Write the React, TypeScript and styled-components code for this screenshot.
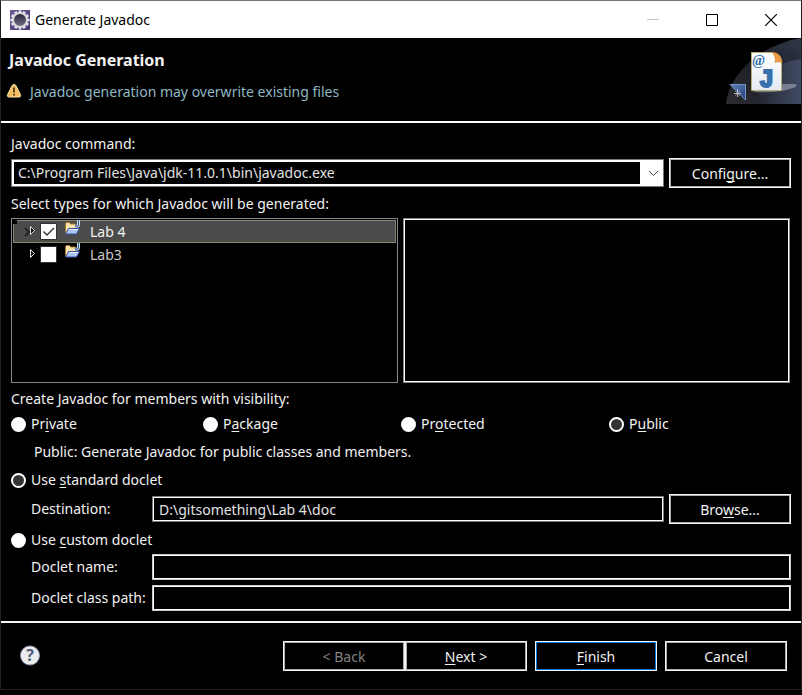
import React, { useState } from "react";
import styled, { createGlobalStyle, css } from "styled-components";

const GlobalStyle = createGlobalStyle`
  *, *::before, *::after { box-sizing: border-box; }
  body {
    margin: 0;
    background: #000;
    color: #f2f2f2;
    font-family: "Noto Sans", "Open Sans", sans-serif;
    font-size: 14px;
    line-height: 20px;
  }
  button, input, select { font: inherit; color: inherit; margin: 0; }
`;

const Dialog = styled.div`
  display: flex;
  flex-direction: column;
  min-height: calc(100vh - 5px);
  border: 1px solid #1f1f1f;
  border-top-color: #767676;
`;

const TitleBar = styled.header`
  display: flex;
  align-items: center;
  height: 37px;
  padding: 0 1px 0 9px;
  background: #fff;
  color: #000;
`;

const TitleText = styled.span`
  flex: 1;
  padding-left: 5px;
`;

const CaptionButton = styled.button`
  display: flex;
  align-items: center;
  justify-content: center;
  width: 59px;
  height: 36px;
  padding: 0;
  border: 0;
  background: none;
`;

const Banner = styled.section`
  display: flex;
  justify-content: space-between;
  height: 85px;
  padding-left: 8px;
  border-bottom: 2px solid #fff;
`;

const BannerHeading = styled.h1`
  margin: 12px 0;
  font-size: 16px;
  line-height: 20px;
  font-weight: 700;
`;

const BannerMessage = styled.p`
  display: flex;
  align-items: center;
  gap: 8px;
  margin: 0;
  margin-left: -3px;
  color: #8fb9c4;
`;

const Body = styled.main`
  display: flex;
  flex: 1;
  flex-direction: column;
  padding: 11px 10px 10px;
`;

const Caption = styled.div`
  padding-bottom: 4px;
`;

const FieldLabel = styled.label`
  display: block;
  white-space: nowrap;
`;

const CommandRow = styled.div`
  display: flex;
  align-items: center;
  gap: 5px;
  padding: 4px 0 6px;
`;

const ComboWrap = styled.div`
  position: relative;
  flex: 1;
  min-width: 0;
`;

const Combo = styled.select`
  display: block;
  width: 100%;
  height: 28px;
  padding: 0 4px;
  appearance: none;
  border: 3px solid #fff;
  border-right-width: 24px;
  border-radius: 0;
  outline: 1px solid #767676;
  outline-offset: -1px;
  background: #000;
  color: #e2e2e2;
`;

const ComboArrow = styled.svg`
  position: absolute;
  top: 11px;
  right: 5px;
  pointer-events: none;
`;

const PushButton = styled.button<{ $primary?: boolean }>`
  width: 122px;
  height: 30px;
  padding: 1px 0 0;
  border: 1px solid #f5f5f5;
  border-radius: 0;
  background: #000;
  box-shadow: inset 0 0 0 1px ${(p) => (p.$primary ? "#0078d7" : "#adadad")};
  &:disabled { color: #838383; }
`;

const Panels = styled.div`
  display: grid;
  flex: 1;
  grid-template-columns: 1fr 1fr;
  gap: 5px;
  min-height: 165px;
  margin-right: 1px;
  margin-bottom: 6px;
`;

const Tree = styled.ul`
  margin: 0;
  padding: 1px;
  list-style: none;
  border: 1px solid #828790;
`;

const TreeItem = styled.li<{ $selected?: boolean }>`
  position: relative;
  display: flex;
  align-items: center;
  height: 23px;
  padding-left: 9px;
  border: 1px solid transparent;
  color: #c8c8c8;
  ${(p) =>
    p.$selected &&
    css`
      border-color: #85876c;
      background: #4b4b4b;
      color: #f2f2f2;
      &::before {
        content: "";
        position: absolute;
        top: -1px;
        left: -1px;
        width: 4px;
        height: 4px;
        background: #000;
      }
    `}
`;

const Expander = styled.button`
  display: flex;
  width: 18px;
  padding: 0;
  border: 0;
  background: none;
`;

const TreeLabel = styled.label`
  display: flex;
  align-items: center;
  gap: 8px;
`;

const CheckCell = styled.span`
  position: relative;
  display: flex;
`;

const CheckInput = styled.input`
  width: 15px;
  height: 15px;
  appearance: none;
  background: #fff;
  outline: 1px solid #333;
`;

const Tick = styled.svg`
  position: absolute;
  top: 0;
  left: 0;
  pointer-events: none;
`;

const ProjectIcon = styled.svg`
  display: block;
  margin-bottom: 8px;
`;

const ItemName = styled.span`
  padding-left: 2px;
`;

const MemberPane = styled.div`
  border: 2px solid #fff;
  outline: 1px solid #828790;
  outline-offset: -1px;
  background: #000200;
`;

const RadioGrid = styled.div`
  display: grid;
  grid-template-columns: 192fr 198fr 208fr 182fr;
  padding-top: 1px;
`;

const RadioLabel = styled.label`
  display: flex;
  align-items: center;
  gap: 5px;
`;

const RadioInput = styled.input`
  flex: none;
  width: 15px;
  height: 15px;
  appearance: none;
  border: 2px solid #fff;
  border-radius: 50%;
  background: #fff;
  &:checked { background: #333; }
`;

const Hint = styled.p`
  margin: 0;
  padding: 8px 0 8px 23px;
`;

const FieldRow = styled.div<{ $height: number }>`
  display: grid;
  grid-template-columns: 116px 1fr auto;
  align-items: center;
  column-gap: 5px;
  height: ${(p) => p.$height}px;
  padding-left: 20px;
`;

const DestinationRow = styled(FieldRow)`
  margin: 4px 0 6px;
`;

const DocletFields = styled.div`
  display: grid;
  gap: 5px;
  padding-top: 4px;
`;

const TextInput = styled.input<{ $wide?: boolean }>`
  grid-column: ${(p) => (p.$wide ? "2 / -1" : "2")};
  width: 100%;
  min-width: 0;
  height: 26px;
  padding: 0 5px;
  border: 2px solid #fff;
  border-radius: 0;
  outline: 1px solid ${(p) => (p.$wide ? "#c8c8c8" : "#7a7a7a")};
  outline-offset: -1px;
  background: #000;
  color: #e2e2e2;
`;

const Footer = styled.footer`
  display: flex;
  align-items: center;
  gap: 8px;
  height: 68px;
  padding: 0 14px 0 18px;
  border-top: 2px solid #f4f4f4;
`;

const HelpButton = styled.button`
  display: flex;
  margin-right: auto;
  padding: 0;
  border: 0;
  background: none;
`;

const ButtonPair = styled.div`
  display: flex;
`;

const Mnemonic = styled.u`
  text-underline-offset: 2px;
  text-decoration-skip-ink: none;
`;

const teeth = Array.from({ length: 12 }, (_, i) => i * 30);

function GearLogo() {
  return (
    <svg width="20" height="20" viewBox="0 0 20 20" aria-hidden="true">
      <defs>
        <linearGradient id="gearBack" x1="0" y1="0" x2="1" y2="1">
          <stop offset="0" stopColor="#6f5b93" />
          <stop offset="1" stopColor="#43346b" />
        </linearGradient>
        <linearGradient id="gearCore" x1="0" y1="0" x2="0" y2="1">
          <stop offset="0" stopColor="#222231" />
          <stop offset="1" stopColor="#77748f" />
        </linearGradient>
      </defs>
      <rect width="20" height="20" fill="url(#gearBack)" />
      {teeth.map((a) => (
        <rect key={a} x="8.6" y="0.4" width="2.8" height="4" fill="#e4e2e8" transform={`rotate(${a} 10 10)`} />
      ))}
      <circle cx="10" cy="10" r="7" fill="url(#gearCore)" stroke="#dddbe2" strokeWidth="2" />
    </svg>
  );
}

function WarningIcon() {
  return (
    <svg width="16" height="16" viewBox="0 0 16 16" aria-hidden="true">
      <path d="M8 .5C9.400.5 9.800 1.300 10.400 2.500l4 8c.7 1.500 0 2.500-1.300 2.500H2.900c-1.300 0-2-1-1.300-2.500l4-8C6.200 1.300 6.600.5 8 .5Z" fill="#f4bd62" stroke="#fae0aa" />
      <path d="M8 3.500v5M8 9.800v1.700" stroke="#4d3518" strokeWidth="1.800" />
    </svg>
  );
}

function BannerArt() {
  return (
    <svg width="75" height="66" viewBox="0 0 75 66" aria-hidden="true">
      <defs>
        <linearGradient id="outerGlow" x1="0" y1="1" x2="1" y2="0">
          <stop offset="0" stopColor="#2b2c31" />
          <stop offset=".5" stopColor="#1d1f26" />
          <stop offset="1" stopColor="#30374a" />
        </linearGradient>
        <linearGradient id="innerGlow" x1="0" y1="0" x2="1" y2="0">
          <stop offset="0" stopColor="#22252d" />
          <stop offset="1" stopColor="#414b66" />
        </linearGradient>
        <linearGradient id="sheet" x1="0" y1="0" x2="0" y2="1">
          <stop offset="0" stopColor="#fff" />
          <stop offset="1" stopColor="#e4eaf2" />
        </linearGradient>
        <linearGradient id="wedge" x1="0" y1="0" x2="1" y2="1">
          <stop offset="0" stopColor="#6384bd" />
          <stop offset="1" stopColor="#243f7a" />
        </linearGradient>
      </defs>
      <path d="M0 66C3 36 34 7 75 0v66Z" fill="url(#outerGlow)" />
      <path d="M30 66C31 43 45 25 75 21v45Z" fill="url(#innerGlow)" />
      <path d="M27 53l14-7h27c4 0 3 3-1 4-11 4-25 5-38 4Z" fill="#8b8da0" opacity=".8" />
      <path d="M4 46.500h15.500V62Z" fill="url(#wedge)" stroke="#7893c4" />
      <path d="M11.500 51v8M8 55.500h7" stroke="#d9dce3" strokeWidth=".8" />
      <path d="M9 53l5 5M14 53l-5 5" stroke="#a8adb8" strokeWidth=".5" />
      <path d="M25.500 14.500h22l8 9v29h-30Z" fill="url(#sheet)" stroke="#b8ad72" />
      <path d="M46 14.500c6-.5 10 4 10 10-3-1-5-1-7 0 1-4 0-7-3-10Z" fill="#ef9c45" stroke="#c98534" strokeWidth=".6" />
      <text x="26" y="27" fontSize="14" fontWeight="700" fontFamily="Liberation Serif, serif" fill="#286aa5">@</text>
      <text x="33" y="49" fontSize="25" fontWeight="700" fontFamily="Liberation Mono, monospace" fill="#3871ab" stroke="#3871ab" strokeWidth="2">J</text>
    </svg>
  );
}

function FolderIcon() {
  return (
    <ProjectIcon width="16" height="16" viewBox="0 0 16 16" aria-hidden="true">
      <path d="M1.500 12.500v-9l1-1h3l1 1.500h5v8Z" fill="#fbe3ad" stroke="#a6792d" />
      <path d="M.5 3.500h1.500" stroke="#6b5330" />
      <path d="M4.500 8.500h11l-3 5.500h-11Z" fill="#a9c6f5" stroke="#3453a5" />
      <path d="M5.500 9.500h8.500" stroke="#e6f0ff" />
      <path d="M14.500 0v4.500c0 2-2.500 2-3.500 1" fill="none" stroke="#eef4ff" strokeWidth="3" />
      <path d="M14.500 0v4.500c0 2-2.500 2-3.500 1" fill="none" stroke="#2c5d9d" strokeWidth="1.300" />
    </ProjectIcon>
  );
}

function ExpandArrow({ shadow }: { shadow?: boolean }) {
  return (
    <svg width="14" height="18" viewBox="0 0 14 18" aria-hidden="true">
      {shadow && <path d="M2 5l4 4-4 4" fill="none" stroke="#242424" strokeWidth="2" />}
      <path d="M7.500 3.500v8l4-4Z" fill="#111" stroke="#dcdcdc" />
    </svg>
  );
}

const visibilities = [
  { id: "private", before: "Pr", key: "i", after: "vate" },
  { id: "package", before: "P", key: "a", after: "ckage" },
  { id: "protected", before: "Pr", key: "o", after: "tected" },
  { id: "public", before: "P", key: "u", after: "blic" },
];

export default function App() {
  const [visibility, setVisibility] = useState("public");
  const [doclet, setDoclet] = useState("standard");
  const [checked, setChecked] = useState<Record<string, boolean>>({ "Lab 4": true, Lab3: false });

  return (
    <>
      <GlobalStyle />
      <Dialog role="dialog" aria-label="Generate Javadoc">
        <TitleBar>
          <GearLogo />
          <TitleText>Generate Javadoc</TitleText>
          <CaptionButton aria-label="Minimize" disabled>
            <svg width="12" height="12"><path d="M0 5.500h12" stroke="#c4c4c4" /></svg>
          </CaptionButton>
          <CaptionButton aria-label="Maximize">
            <svg width="12" height="12"><path d="M.5.5h11v11H.5Z" fill="none" stroke="#000" /></svg>
          </CaptionButton>
          <CaptionButton aria-label="Close">
            <svg width="12" height="12"><path d="M0 0l12 12M12 0L0 12" stroke="#000" strokeWidth="1.200" /></svg>
          </CaptionButton>
        </TitleBar>

        <Banner>
          <div>
            <BannerHeading>Javadoc Generation</BannerHeading>
            <BannerMessage><WarningIcon />Javadoc generation may overwrite existing files</BannerMessage>
          </div>
          <BannerArt />
        </Banner>

        <Body>
          <FieldLabel htmlFor="command">Javadoc command:</FieldLabel>
          <CommandRow>
            <ComboWrap>
              <Combo id="command">
                <option>C:\Program Files\Java\jdk-11.0.1\bin\javadoc.exe</option>
              </Combo>
              <ComboArrow width="11" height="7" viewBox="0 0 11 7">
                <path d="M1 1l4.500 4.500L10 1" fill="none" stroke="#444" />
              </ComboArrow>
            </ComboWrap>
            <PushButton>Confi<Mnemonic>g</Mnemonic>ure...</PushButton>
          </CommandRow>

          <Caption>Select types for which Javadoc will be generated:</Caption>
          <Panels>
            <Tree>
              {["Lab 4", "Lab3"].map((name, i) => (
                <TreeItem key={name} $selected={i === 0}>
                  <Expander aria-label={`Expand ${name}`}><ExpandArrow shadow={i === 0} /></Expander>
                  <TreeLabel>
                    <CheckCell>
                      <CheckInput
                        type="checkbox"
                        checked={checked[name]}
                        onChange={(e) => setChecked({ ...checked, [name]: e.target.checked })}
                      />
                      {checked[name] && (
                        <Tick width="15" height="15"><path d="M2.500 7.500l3.500 3.500 7-7" fill="none" stroke="#333" strokeWidth="1.400" /></Tick>
                      )}
                    </CheckCell>
                    <FolderIcon />
                    <ItemName>{name}</ItemName>
                  </TreeLabel>
                </TreeItem>
              ))}
            </Tree>
            <MemberPane />
          </Panels>

          <Caption>Create Javadoc for members with visibility:</Caption>
          <RadioGrid>
            {visibilities.map((v) => (
              <RadioLabel key={v.id}>
                <RadioInput type="radio" name="visibility" checked={visibility === v.id} onChange={() => setVisibility(v.id)} />
                <span>{v.before}<Mnemonic>{v.key}</Mnemonic>{v.after}</span>
              </RadioLabel>
            ))}
          </RadioGrid>
          <Hint>Public: Generate Javadoc for public classes and members.</Hint>

          <RadioLabel>
            <RadioInput type="radio" name="doclet" checked={doclet === "standard"} onChange={() => setDoclet("standard")} />
            <span>Use <Mnemonic>s</Mnemonic>tandard doclet</span>
          </RadioLabel>
          <DestinationRow $height={30}>
            <FieldLabel htmlFor="destination">Destination:</FieldLabel>
            <TextInput id="destination" defaultValue="D:\gitsomething\Lab 4\doc" />
            <PushButton>Bro<Mnemonic>w</Mnemonic>se...</PushButton>
          </DestinationRow>
          <RadioLabel>
            <RadioInput type="radio" name="doclet" checked={doclet === "custom"} onChange={() => setDoclet("custom")} />
            <span>Use <Mnemonic>c</Mnemonic>ustom doclet</span>
          </RadioLabel>
          <DocletFields>
            <FieldRow $height={26}>
              <FieldLabel htmlFor="docletName">Doclet name:</FieldLabel>
              <TextInput id="docletName" $wide />
            </FieldRow>
            <FieldRow $height={26}>
              <FieldLabel htmlFor="docletPath">Doclet class path:</FieldLabel>
              <TextInput id="docletPath" $wide />
            </FieldRow>
          </DocletFields>
        </Body>

        <Footer>
          <HelpButton aria-label="Help">
            <svg width="22" height="22" viewBox="0 0 22 22">
              <circle cx="11" cy="10.500" r="9.500" fill="#ececec" stroke="#8e9bb3" />
              <text x="11" y="16" textAnchor="middle" fontSize="16" fontWeight="700" fontFamily="Open Sans, sans-serif" fill="#4c5b80">?</text>
            </svg>
          </HelpButton>
          <ButtonPair>
            <PushButton disabled>&lt; Back</PushButton>
            <PushButton><Mnemonic>N</Mnemonic>ext &gt;</PushButton>
          </ButtonPair>
          <PushButton $primary><Mnemonic>F</Mnemonic>inish</PushButton>
          <PushButton>Cancel</PushButton>
        </Footer>
      </Dialog>
    </>
  );
}
